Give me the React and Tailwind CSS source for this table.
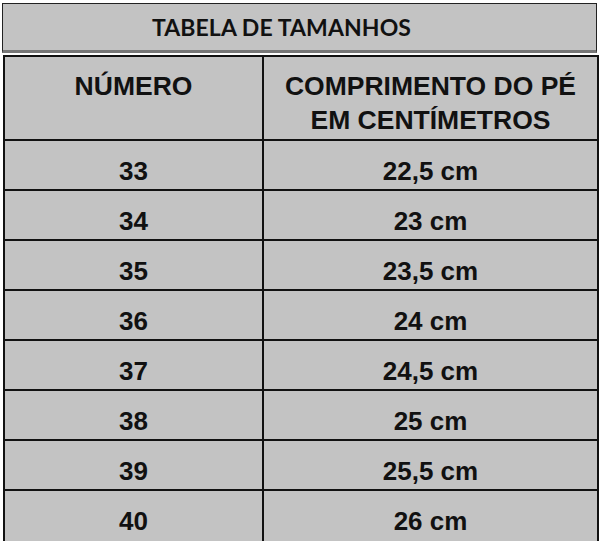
export default function App() {
  const rows = [
    ["33", "22,5 cm"],
    ["34", "23 cm"],
    ["35", "23,5 cm"],
    ["36", "24 cm"],
    ["37", "24,5 cm"],
    ["38", "25 cm"],
    ["39", "25,5 cm"],
    ["40", "26 cm"],
  ];
  const arial = { fontFamily: '"Liberation Sans", Arial, sans-serif' };
  return (
    <div className="w-[600px] h-[541px] bg-white overflow-hidden">
      <div className="ml-[2px] mt-[3px] w-[595px] h-[50px] border border-[#222] border-b-[3px] border-b-[#777] bg-[#c3c3c3] flex items-center justify-center pr-[36px]">
        <span
          className="text-[23px] font-bold text-[#111] tracking-[0.1px]"
          style={{ fontFamily: 'Lato, "Open Sans", sans-serif' }}
        >
          TABELA DE TAMANHOS
        </span>
      </div>
      <div
        className="ml-[3px] mt-[2px] w-[596px] border-2 border-[#111] bg-[#c3c3c3] text-[#111] font-bold"
        style={arial}
      >
        <div className="flex h-[84px] border-b-2 border-[#111]">
          <div className="w-[259px] border-r-2 border-[#111] flex justify-center pt-[12px] text-[26.5px] leading-[34px]">
            NÚMERO
          </div>
          <div className="flex-1 flex flex-col items-center pt-[12px] text-[26.5px] leading-[34px]">
            <span>COMPRIMENTO DO PÉ</span>
            <span>EM CENTÍMETROS</span>
          </div>
        </div>
        {rows.map(([n, c], i) => (
          <div
            key={n}
            className={`flex h-[50px] ${i < rows.length - 1 ? "border-b-2 border-[#111]" : ""}`}
          >
            <div className="w-[259px] border-r-2 border-[#111] flex justify-center pt-[17px] text-[26px] leading-[26px]">
              {n}
            </div>
            <div className="flex-1 flex justify-center pt-[17px] text-[26px] leading-[26px]">
              {c}
            </div>
          </div>
        ))}
      </div>
    </div>
  );
}
